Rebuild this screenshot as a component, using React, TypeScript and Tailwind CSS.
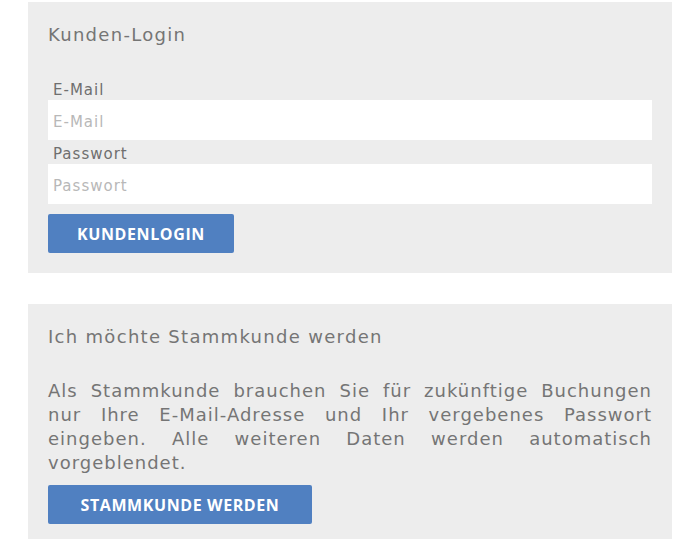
export default function App() {
  const font = { fontFamily: '"DejaVu Sans", Verdana, sans-serif' };
  const btnFont = '"Open Sans", "Noto Sans", sans-serif';
  return (
    <div className="w-[700px] h-[539px] bg-white overflow-hidden text-[#777]" style={font}>
      <div className="ml-[28px] mt-[2px] w-[644px] bg-[#ededed] px-[20px] pt-[20px] pb-[20px]">
        <div className="text-[18px] leading-[26px] tracking-[1.3px] text-[#757575]">Kunden-Login</div>
        <div className="mt-[32px] pl-[5px] text-[15px] leading-[20px] tracking-[1px] text-[#6f6f6f]">E-Mail</div>
        <input
          className="block w-full h-[40px] bg-white px-[5px] pt-[3px] text-[15px] tracking-[1px] outline-none placeholder:text-[#b8b8b8]"
          placeholder="E-Mail"
          style={font}
        />
        <div className="mt-[4px] pl-[5px] text-[15px] leading-[20px] tracking-[1px] text-[#6f6f6f]">Passwort</div>
        <input
          className="block w-full h-[40px] bg-white px-[5px] pt-[3px] text-[15px] tracking-[1px] outline-none placeholder:text-[#b8b8b8]"
          placeholder="Passwort"
          style={font}
        />
        <button
          className="mt-[10px] block w-[186px] h-[39px] rounded-[2px] bg-[#5080c1] text-white text-[16px] font-bold tracking-[0.6px]"
          style={{ fontFamily: btnFont }}
        >
          KUNDENLOGIN
        </button>
      </div>
      <div className="ml-[28px] mt-[31px] w-[644px] bg-[#ededed] px-[20px] pt-[20px] pb-[20px]">
        <div className="text-[18px] leading-[26px] tracking-[1.3px] text-[#757575]">Ich möchte Stammkunde werden</div>
        <p className="mt-[29px] text-[18px] leading-[24px] tracking-[1px] text-justify text-[#757575]">
          Als Stammkunde brauchen Sie für zukünftige Buchungen nur Ihre E-Mail-Adresse und Ihr vergebenes Passwort eingeben. Alle weiteren Daten werden automatisch vorgeblendet.
        </p>
        <button
          className="mt-[10px] block w-[264px] h-[39px] rounded-[2px] bg-[#5080c1] text-white text-[16px] font-bold tracking-[0.6px]"
          style={{ fontFamily: btnFont }}
        >
          STAMMKUNDE WERDEN
        </button>
      </div>
    </div>
  );
}
